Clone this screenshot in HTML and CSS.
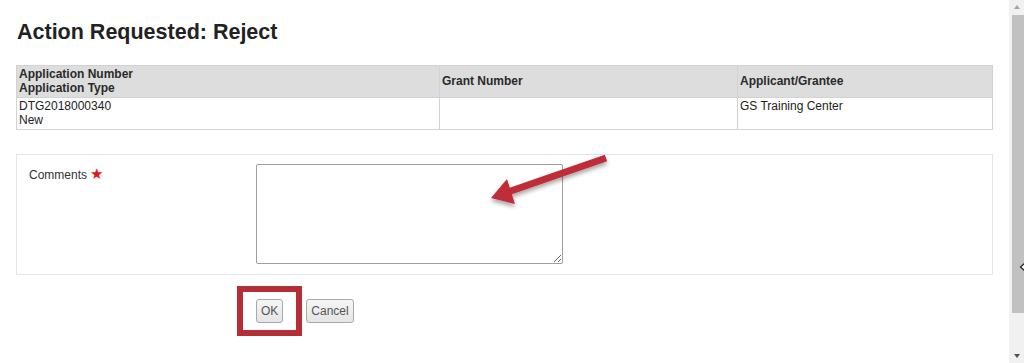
FILE: index.html
```html
<!DOCTYPE html>
<html>
<head>
<meta charset="utf-8">
<link rel="stylesheet" href="styles.css">
</head>
<body>
<div class="page">
  <main class="main">
    <h1 class="title">Action Requested: Reject</h1>
    <table class="info">
      <colgroup>
        <col class="c1"><col class="c2"><col class="c3">
      </colgroup>
      <thead>
        <tr>
          <th>Application Number<br>Application Type</th>
          <th>Grant Number</th>
          <th>Applicant/Grantee</th>
        </tr>
      </thead>
      <tbody>
        <tr>
          <td>DTG2018000340<br>New</td>
          <td></td>
          <td>GS Training Center</td>
        </tr>
      </tbody>
    </table>
    <div class="panel">
      <div class="label">Comments <span class="req">★</span></div>
      <textarea class="comments"></textarea>
    </div>
    <div class="actions">
      <button class="btn">OK</button>
      <button class="btn">Cancel</button>
    </div>
    <div class="highlight"></div>
    <svg class="arrow" width="140" height="70" viewBox="480 145 140 70">
      <defs>
        <filter id="sh" x="-20%" y="-40%" width="140%" height="180%">
          <feDropShadow dx="0" dy="3" stdDeviation="2" flood-color="#000" flood-opacity="0.35"/>
        </filter>
      </defs>
      <g filter="url(#sh)" fill="#bf2f37">
        <line x1="606" y1="158" x2="505" y2="193" stroke="#bf2f37" stroke-width="7"/>
        <polygon points="491,198 507,179 515,204"/>
      </g>
    </svg>
  </main>
  <div class="scrollbar">
    <div class="sb-up"></div>
    <div class="sb-thumb"></div>
    <div class="sb-down"></div>
    <svg class="cursor" width="8" height="12" viewBox="0 0 8 12">
      <path d="M6.5 1.5 L1.5 6 L6.5 10.5 Z" fill="#fff" stroke="#222" stroke-width="1.2"/>
    </svg>
  </div>
</div>
</body>
</html>
```

FILE: styles.css
```css
html, body {
  margin: 0;
  padding: 0;
  background: #fff;
}
body {
  font-family: "Liberation Sans", Arial, sans-serif;
  color: #222;
}
.page {
  display: flex;
  width: 1024px;
  height: 363px;
  overflow: hidden;
}
.main {
  position: relative;
  flex: 1;
  padding: 20px 16px 0 16px;
}
.title {
  margin: 0 0 20px 1px;
  font-size: 21.5px;
  line-height: 25px;
  font-weight: bold;
  color: #222;
}
.info {
  width: 976px;
  border-collapse: collapse;
  table-layout: fixed;
  font-size: 12px;
  line-height: 14px;
}
.info .c1 { width: 423px; }
.info .c2 { width: 298px; }
.info .c3 { width: 255px; }
.info th, .info td {
  border: 1px solid #d2d2d2;
  padding: 1px 2px 2px 2px;
  text-align: left;
}
.info th {
  background: #dddddd;
  font-weight: bold;
  vertical-align: middle;
  color: #2a2a2a;
  height: 28px;
}
.info td {
  vertical-align: top;
  height: 28px;
  color: #222;
}
.panel {
  margin-top: 24px;
  border: 1px solid #e4e4e4;
  padding: 9px 12px 10px 12px;
  display: grid;
  grid-template-columns: 227px 307px;
  height: 100px;
}
.label {
  font-size: 12px;
  line-height: 14px;
  padding-top: 3px;
  color: #333;
}
.req {
  color: #e8141b;
  font-size: 15px;
  line-height: 14px;
}
.comments {
  box-sizing: border-box;
  width: 307px;
  height: 100px;
  margin: 0;
  border: 1px solid #9e9e9e;
  border-radius: 2px;
  resize: both;
}
.actions {
  display: flex;
  gap: 23px;
  margin: 24px 0 0 240px;
}
.btn {
  box-sizing: border-box;
  height: 24px;
  padding: 0 4px;
  font-family: "Liberation Sans", Arial, sans-serif;
  font-size: 12px;
  color: #555;
  background: linear-gradient(#f6f6f6, #e4e4e4);
  border: 1px solid #a9a9a9;
  border-radius: 3px;
}
.highlight {
  position: absolute;
  left: 237px;
  top: 286px;
  width: 65px;
  height: 50px;
  box-sizing: border-box;
  border: 6px solid #b52d35;
}
.arrow {
  position: absolute;
  left: 480px;
  top: 145px;
}
.scrollbar {
  position: relative;
  width: 17px;
  background: #f1f1f1;
  display: flex;
  flex-direction: column;
  align-items: center;
}
.sb-up, .sb-down {
  width: 0;
  height: 0;
  border-left: 3.5px solid transparent;
  border-right: 3.5px solid transparent;
}
.sb-up {
  margin-top: 5px;
  border-bottom: 4px solid #a3a3a3;
}
.sb-down {
  margin-top: auto;
  margin-bottom: 5px;
  border-top: 4px solid #505050;
}
.sb-thumb {
  width: 12px;
  height: 298px;
  margin-top: 6px;
  margin-left: 3px;
  background: #c1c1c1;
}
.cursor {
  position: absolute;
  left: 10px;
  top: 261px;
}
```
